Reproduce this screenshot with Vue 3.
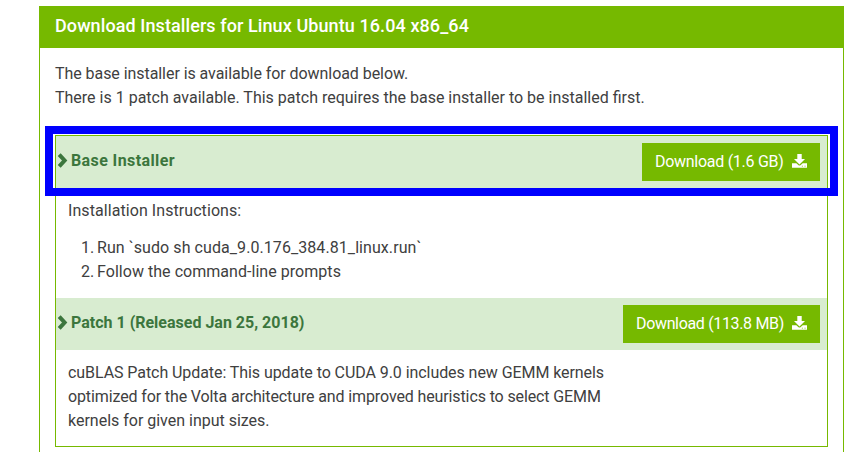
<script setup>
const introLines = [
  { text: 'The base installer is available for download below.', cls: 'intro-a' },
  { text: 'There is 1 patch available. This patch requires the base installer to be installed first.', cls: 'intro-b' },
]
const steps = [
  { text: 'Run `sudo sh cuda_9.0.176_384.81_linux.run`', cls: 'step-a' },
  { text: 'Follow the command-line prompts', cls: 'step-b' },
]
const patchLines = [
  { text: 'cuBLAS Patch Update: This update to CUDA 9.0 includes new GEMM kernels', cls: 'note-a' },
  { text: 'optimized for the Volta architecture and improved heuristics to select GEMM', cls: 'note-b' },
  { text: 'kernels for given input sizes.', cls: 'note-c' },
]
</script>

<template>
  <main class="page">
    <section class="panel">
      <h1 class="panel-title"><span>Download Installers for Linux Ubuntu 16.04 x86_64</span></h1>
      <div class="panel-body">
        <p class="intro">
          <span v-for="l in introLines" :key="l.cls" class="line" :class="l.cls">{{ l.text }}</span>
        </p>
        <div class="installers">
          <div class="row base">
            <svg class="chevron" viewBox="0 0 11 15"><path d="M2.2 1.7 7.6 7.5 2.2 13.3" /></svg>
            <h2 class="name name-base">Base Installer</h2>
            <a class="button button-base">
              <span>Download (1.6 GB)</span>
              <svg class="download" viewBox="0 0 15 14"><path d="M5.3 0h4.4v5h3.3L7.5 10.4 2 5h3.3zM0 9.3h4.3l2 1.8q1.2 1 2.4 0l2-1.8H15V13.7H0z" /><path class="lights" d="M9.8 11.7h1.1v.9H9.8zM12.5 11.7h1.1v.9h-1.1z" /></svg>
            </a>
            <div class="highlight"></div>
          </div>
          <div class="details">
            <p class="label">Installation Instructions:</p>
            <ol class="steps">
              <li v-for="(s, i) in steps" :key="s.cls"><span class="num">{{ i + 1 }}.</span><span :class="s.cls">{{ s.text }}</span></li>
            </ol>
          </div>
          <div class="row">
            <svg class="chevron" viewBox="0 0 11 15"><path d="M2.2 1.7 7.6 7.5 2.2 13.3" /></svg>
            <h2 class="name name-patch">Patch 1 (Released Jan 25, 2018)</h2>
            <a class="button button-patch">
              <span>Download (113.8 MB)</span>
              <svg class="download" viewBox="0 0 15 14"><path d="M5.3 0h4.4v5h3.3L7.5 10.4 2 5h3.3zM0 9.3h4.3l2 1.8q1.2 1 2.4 0l2-1.8H15V13.7H0z" /><path class="lights" d="M9.8 11.7h1.1v.9H9.8zM12.5 11.7h1.1v.9h-1.1z" /></svg>
            </a>
          </div>
          <p class="note">
            <span v-for="l in patchLines" :key="l.cls" class="line" :class="l.cls">{{ l.text }}</span>
          </p>
        </div>
      </div>
    </section>
  </main>
</template>

<style>
body { margin: 0; background: #fff; overflow: hidden; }
</style>

<style scoped>
* { box-sizing: border-box; }
.page {
  height: 452px;
  padding: 6px 6px 0 39px;
  overflow: hidden;
  font: 16px/24px Roboto, "Liberation Sans", sans-serif;
  color: #404040;
  white-space: nowrap;
}
.panel { height: 500px; border: 1px solid #76b900; }
.panel-title {
  margin: 0;
  height: 41px;
  padding: 7px 15px 0;
  background: #76b900;
  color: #fff;
  font-size: 18px;
  line-height: 24px;
  font-weight: 500;
  letter-spacing: 0.09px;
}
.panel-body { padding: 14px 15px 0; }
.intro { margin: 0 0 25px; }
.intro-a { letter-spacing: -0.06px; }
.line { display: block; }
.installers { border: 1px solid #76b900; height: 312px; }
.row {
  position: relative;
  display: flex;
  align-items: center;
  height: 52px;
  padding: 0 7px 0 1px;
  background: #d8ecd0;
  color: #3c763d;
}
.chevron { width: 11px; height: 15px; margin: -4px 3px 0 0; fill: none; stroke: #3c763d; stroke-width: 4; }
.name { margin: -2px 0 0; font-size: 16px; line-height: 24px; font-weight: 700; }
.name-base { letter-spacing: 0.4px; }
.button {
  display: flex;
  align-items: center;
  justify-content: space-between;
  height: 38px;
  margin-left: auto;
  padding: 0 13px;
  background: #76b900;
  color: #fff;
}
.button-base { width: 178px; letter-spacing: -0.28px; }
.button-patch { width: 197px; letter-spacing: -0.34px; }
.download { width: 15px; height: 14px; margin-top: -2px; fill: #fff; }
.lights { fill: #76b900; }
.highlight {
  position: absolute;
  top: -10px;
  left: -11px;
  width: 793px;
  height: 70px;
  border: 8px solid #00f;
}
.details { height: 110px; padding: 11px 12px 0; }
.label { margin: 0 0 13px; letter-spacing: 0.07px; }
.steps { margin: 0; padding: 0; list-style: none; }
.steps li { display: flex; }
.num { width: 29px; padding-left: 13px; }
.step-a { letter-spacing: 0.07px; }
.step-b { letter-spacing: 0.04px; }
.note { margin: 0; padding: 11px 12px 0; }
.note-a { letter-spacing: -0.07px; }
.note-b { letter-spacing: -0.12px; }
.note-c { letter-spacing: -0.01px; }
</style>
